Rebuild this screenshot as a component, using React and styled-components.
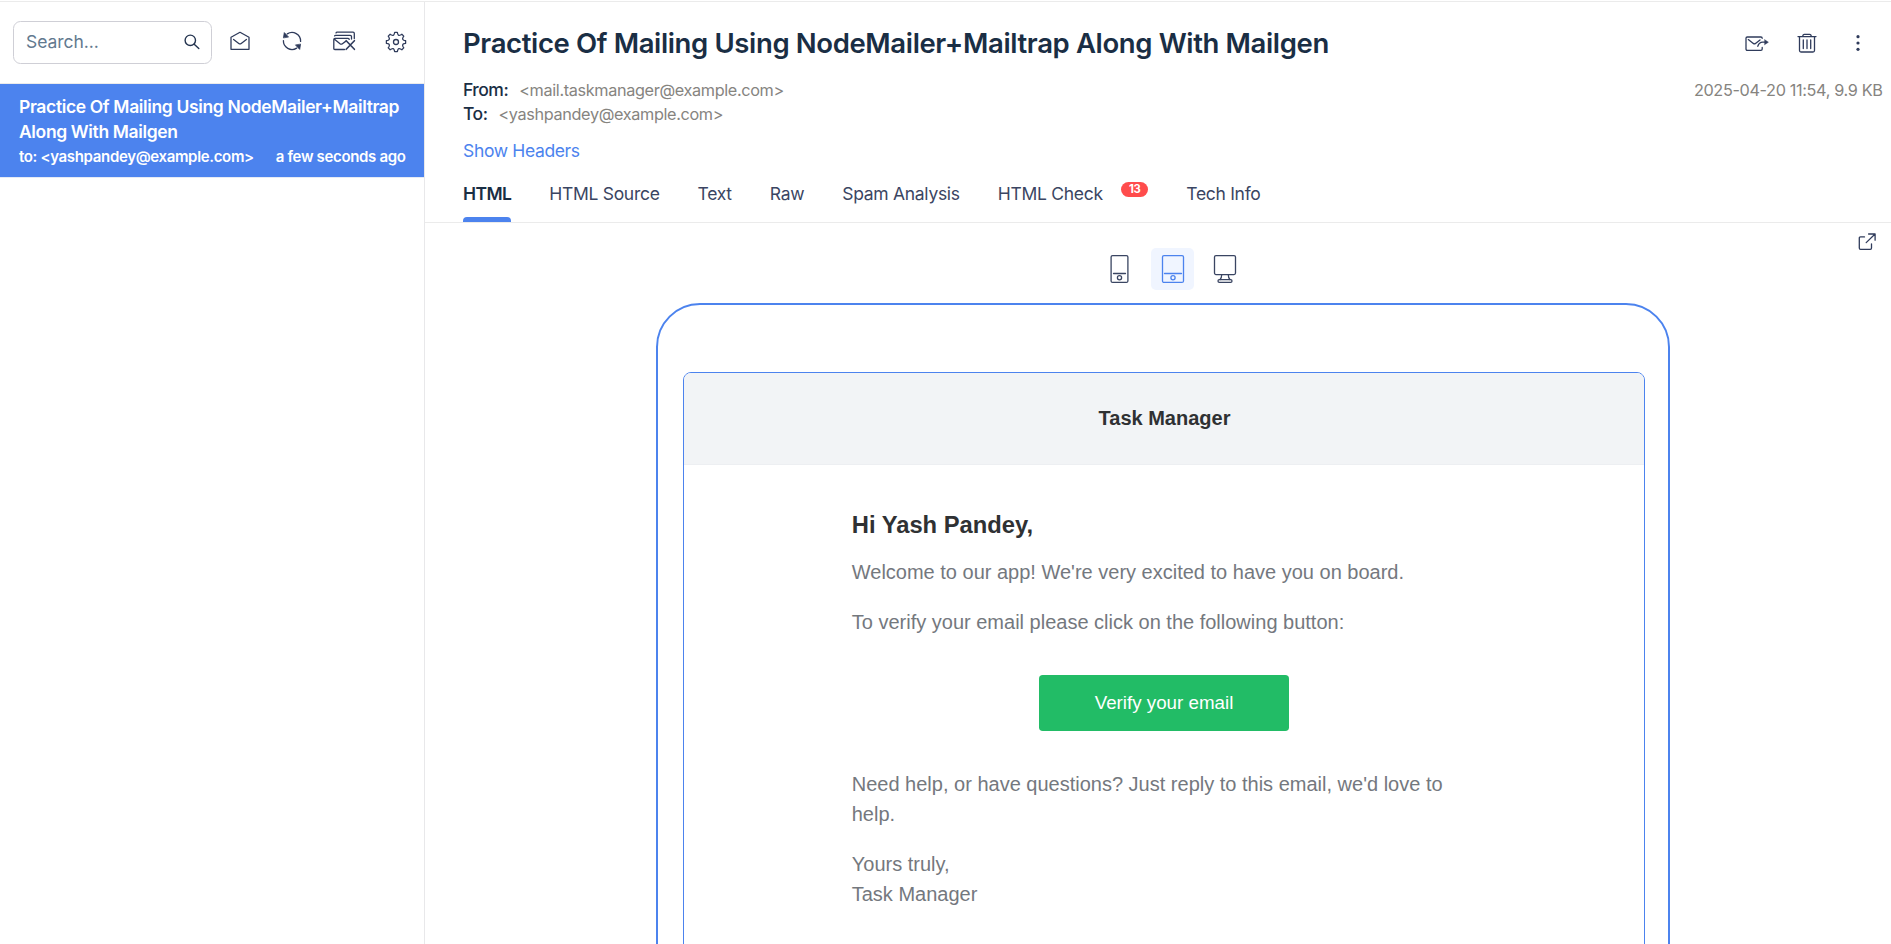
import React from 'react';
import styled, { createGlobalStyle } from 'styled-components';

const Global = createGlobalStyle`
  *, *::before, *::after { box-sizing: border-box; }
  html, body { margin: 0; height: 100%; overflow: hidden; background: #fff; }
  body { font-family: Inter, "Liberation Sans", sans-serif; color: #1a2e44; }
  #root { height: 100%; }
`;

const Page = styled.div`
  display: flex;
  height: 944px;
  border-top: 1px solid #fff;
`;
const Frame = styled.div`
  display: flex;
  flex: 1;
  border-top: 1px solid #ebebeb;
`;
const Sidebar = styled.aside`
  width: 425px;
  flex: none;
  border-right: 1px solid #e8e8ea;
`;
const Toolbar = styled.div`
  display: flex;
  align-items: center;
  height: 82px;
  padding: 0 0 1px 13px;
  border-bottom: 1px solid #ebebeb;
`;
const SearchBox = styled.div`
  display: flex;
  align-items: center;
  justify-content: space-between;
  width: 199px;
  height: 43px;
  margin: 0 16px 0 0;
  padding: 0 11.5px 1px 12px;
  border: 1px solid #cfcfd6;
  border-radius: 7.5px;
  font-size: 17.5px;
  letter-spacing: -0.05px;
  color: #62798f;
  svg { color: #24344f; }
`;
const IconButton = styled.button`
  display: flex;
  align-items: center;
  justify-content: center;
  width: 24px;
  height: 24px;
  margin: 0 ${(p) => p.$gap || 0}px ${(p) => p.$lift || 0}px 0;
  padding: 0;
  border: 0;
  background: none;
  color: #2f3b5b;
`;
const Icon = styled.svg`
  display: block;
  flex: none;
  fill: none;
  stroke: currentColor;
  stroke-width: ${(p) => p.$w || 1.3};
  stroke-linejoin: round;
  stroke-linecap: round;
`;
const MessageItem = styled.div`
  height: 94px;
  padding: 10px 18.5px 0 19px;
  background: #4c83ee;
  border-bottom: 1px solid #e4eaf5;
  color: #fff;
  font-weight: 600;
`;
const MessageTitle = styled.div`
  font-size: 17.5px;
  line-height: 25px;
  letter-spacing: -0.36px;
`;
const MessageMeta = styled.div`
  display: flex;
  justify-content: space-between;
  font-size: 15px;
  line-height: 25px;
  letter-spacing: -0.34px;
  white-space: nowrap;
`;
const Main = styled.main`
  flex: 1;
  min-width: 0;
`;
const Header = styled.header`
  height: 221px;
  padding: 20px 8px 0 38px;
  border-bottom: 1px solid #ebebeb;
`;
const TitleRow = styled.div`
  display: flex;
  align-items: center;
  justify-content: space-between;
  height: 42px;
`;
const Title = styled.h1`
  margin: 0;
  font-size: 27.5px;
  font-weight: 600;
  line-height: 42px;
  letter-spacing: -0.365px;
  white-space: nowrap;
`;
const Actions = styled.div`
  display: flex;
  align-items: center;
  padding-right: 13px;
`;
const InfoRow = styled.div`
  display: flex;
  justify-content: space-between;
  margin-top: 14px;
  font-size: 16.25px;
  line-height: 24px;
  letter-spacing: -0.36px;
  color: #86847f;
`;
const Address = styled.div`
  display: flex;
  gap: 11px;
`;
const Label = styled.span`
  color: #1a2e44;
  font-size: 17.5px;
  font-weight: 500;
  letter-spacing: -0.5px;
`;
const DateText = styled.div`
  padding-right: 0.5px;
`;
const HeadersLink = styled.a`
  display: block;
  margin-top: 13px;
  font-size: 17.5px;
  line-height: 24px;
  letter-spacing: -0.35px;
  color: #4c83ee;
`;
const Tabs = styled.nav`
  display: flex;
  gap: 38px;
  margin-top: 18px;
  height: 41px;
`;
const Tab = styled.div`
  display: flex;
  flex-direction: column;
  justify-content: space-between;
  font-size: 17.5px;
  line-height: 26px;
  letter-spacing: ${(p) => (p.$active ? '-0.6px' : '-0.29px')};
  white-space: nowrap;
  color: ${(p) => (p.$active ? '#1a2e44' : '#3a4562')};
  font-weight: ${(p) => (p.$active ? 600 : 400)};
`;
const TabLabel = styled.div`
  display: flex;
`;
const Underline = styled.div`
  height: 5px;
  border-radius: 4px 4px 0 0;
  background: #4c83ee;
`;
const Badge = styled.span`
  width: 27px;
  height: 15px;
  margin-left: 18.5px;
  margin-top: 1px;
  border-radius: 8px;
  background: #ff4c4c;
  color: #fff;
  font-size: 11.25px;
  font-weight: 700;
  line-height: 15px;
  text-align: center;
`;
const Preview = styled.section`
  display: flex;
  flex-direction: column;
  align-items: center;
  height: 721px;
  overflow: hidden;
  padding-left: 10px;
`;
const PopoutRow = styled.div`
  display: flex;
  justify-content: flex-end;
  width: 100%;
  height: 25px;
  padding: 7px 12px 0 0;
`;
const Devices = styled.div`
  display: flex;
  gap: 9px;
  margin-left: 19px;
`;
const Device = styled.button`
  display: flex;
  align-items: center;
  justify-content: center;
  width: 43px;
  height: 42px;
  padding: 0;
  border: 0;
  border-radius: 5px;
  background: ${(p) => (p.$active ? '#f0f5ff' : 'none')};
  color: ${(p) => (p.$active ? '#4c83ee' : '#3a4562')};
`;
const Tablet = styled.div`
  flex: none;
  width: 1014px;
  height: 900px;
  margin-top: 13px;
  padding: 67px 23px 0 25px;
  border: 2px solid #4c83ee;
  border-radius: 44px;
`;
const Screen = styled.div`
  height: 820px;
  border: 1px solid #4c83ee;
  border-radius: 8px;
  overflow: hidden;
  font-family: "Liberation Sans", Arial, sans-serif;
  color: #74787e;
`;
const MailHead = styled.div`
  height: 92px;
  padding-left: 1px;
  border-bottom: 1px solid #edeff2;
  background: #f2f4f6;
  color: #2f3133;
  font-size: 20px;
  font-weight: 700;
  line-height: 90px;
  text-align: center;
`;
const MailBody = styled.div`
  width: 712px;
  margin: 0 auto;
  padding: 43px 43.75px;
`;
const Greeting = styled.h2`
  margin: 0 0 16px;
  color: #2f3133;
  font-size: 23.75px;
  line-height: 33px;
`;
const Paragraph = styled.p`
  margin: 0 0 20px;
  font-size: 20px;
  line-height: 30px;
`;
const VerifyButton = styled.button`
  display: block;
  width: 250px;
  height: 56px;
  margin: 38px auto;
  padding: 0;
  border: 0;
  border-radius: 3.75px;
  background: #22bc66;
  color: #fff;
  font: 18.75px "Liberation Sans", Arial, sans-serif;
  line-height: 56px;
`;

const SearchIcon = () => (
  <Icon width="16" height="16" viewBox="0 0 16 16" $w={1.4}>
    <circle cx="6.3" cy="6.3" r="5.2" /><path d="M10.2 10.2l4.6 4.4" />
  </Icon>
);
const MailOpenIcon = () => (
  <Icon width="24" height="24" viewBox="0 0 24 24">
    <path d="M3 8.3L12 3.3l9 5v12H3zM5.6 10.4l5.2 4c.8.6 1.600.6 2.400 0l5.200-4" />
  </Icon>
);
const RefreshIcon = () => (
  <Icon width="24" height="24" viewBox="0 0 24 24">
    <path d="M7.300 4.900A8.600 8.600 0 0 1 20.600 12.400M16.700 19.100A8.600 8.600 0 0 1 3.400 11.600" />
    <path d="M3.500 8.500l.8-4.900 4 4.200zM20.500 15.500l-.8 4.900-4-4.200z" fill="currentColor" strokeWidth=".8" />
  </Icon>
);
const MailsDeleteIcon = () => (
  <Icon width="24" height="24" viewBox="0 0 24 24">
    <path d="M12.500 20.500H2.900c-.7 0-1.100-.4-1.100-1.100V10.400c0-.7.400-1.100 1.100-1.100h13.200c.7 0 1.100.4 1.100 1.100M2.500 10.200l5.500 4.500c.8.600 1.600.6 2.400 0l3.200-2.300M2.600 6.900c.2-.5.600-.6 1-.6h14.600c.8 0 1.300.4 1.300 1.200v2.600M4 3.900c.2-.5.600-.7 1.100-.7h15.900c.8 0 1.300.5 1.300 1.300v5" />
    <path d="M14.200 11.700l8.200 8.600M22.400 11.700l-8.200 8.600" strokeWidth="1.600" />
  </Icon>
);
const teeth = Array.from({ length: 8 }, (_, i) => {
  const at = (r, deg) => {
    const a = ((i * 45 + deg) * Math.PI) / 180;
    return `${(12 + r * Math.sin(a)).toFixed(2)} ${(12 - r * Math.cos(a)).toFixed(2)}`;
  };
  return `${i ? 'L' : 'M'}${at(9.7, -8)}L${at(9.7, 8)}L${at(8.3, 12)}Q${at(6.4, 22.5)} ${at(8.3, 33)}`;
}).join('');
const GearIcon = () => (
  <Icon width="24" height="24" viewBox="0 0 24 24">
    <path d={`${teeth}Z`} /><circle cx="12" cy="12" r="2.5" />
  </Icon>
);
const ForwardIcon = () => (
  <Icon width="26" height="24" viewBox="0 0 26 24">
    <path d="M18.200 16.500v1.600c0 .8-.5 1.300-1.300 1.300H3.300C2.500 19.400 2 18.900 2 18.100V7.300C2 6.500 2.500 6 3.300 6h13.600c.8 0 1.300.400 1.300 1.300M4.300 8.600l5 3.800c.7.500 1.500.500 2.200 0l4.500-3.500M13.800 15.300c.8-2.500 2.300-4.100 4.800-4.100h3.200" />
    <path d="M20.800 8.800l3.600 2.400-3.600 2.400z" fill="currentColor" strokeWidth=".5" />
  </Icon>
);
const TrashIcon = () => (
  <Icon width="24" height="24" viewBox="0 0 24 24">
    <path d="M3 5.600h18M4.500 5.700v13.800c0 .9.600 1.500 1.500 1.500h12c.9 0 1.500-.6 1.500-1.500V5.700M7.800 5.300c0-1.300.5-2 1.600-2h5.200c1.100 0 1.600.7 1.600 2M8.300 9v8.600M12 9v8.600M15.700 9v8.600" />
  </Icon>
);
const DotsIcon = () => (
  <Icon width="24" height="24" viewBox="0 0 24 24">
    <g fill="currentColor" stroke="none">
      <circle cx="12" cy="5.700" r="1.600" /><circle cx="12" cy="12" r="1.600" /><circle cx="12" cy="18.300" r="1.600" />
    </g>
  </Icon>
);
const PopoutIcon = () => (
  <Icon width="20" height="20" viewBox="0 0 20 20">
    <path d="M7.500 4.900H3.500c-.8 0-1.200.5-1.200 1.200v10c0 .8.500 1.200 1.200 1.200h9.800c.8 0 1.200-.5 1.200-1.200v-4.300M9.200 10.600l8.600-8.400M11.600 2h6.500v6.200" />
  </Icon>
);
const PhoneIcon = () => (
  <Icon width="21" height="30" viewBox="0.500 0 21 30">
    <rect x="1.600" y="1.600" width="16.800" height="26.800" rx="1.500" /><path d="M4 19.500h12" /><circle cx="10" cy="23.800" r="2.100" />
  </Icon>
);
const TabletIcon = () => (
  <Icon width="24" height="30" viewBox="0 0 24 30">
    <rect x="1.500" y="1.600" width="21" height="26.800" rx="1.500" /><path d="M3.500 19.500h17" /><circle cx="12" cy="23.800" r="2.100" />
  </Icon>
);
const DesktopIcon = () => (
  <Icon width="24" height="30" viewBox="0 0 24 30">
    <rect x="1.500" y="1.600" width="21" height="19" rx="1.500" />
    <path d="M8.700 20.800c0 2-.5 3.500-1.600 4.700M15.300 20.800c0 2 .5 3.500 1.600 4.700" />
    <rect x="5" y="25.600" width="14" height="2.700" rx="1.300" />
  </Icon>
);

const tabs = ['HTML', 'HTML Source', 'Text', 'Raw', 'Spam Analysis', 'HTML Check', 'Tech Info'];

export default function App() {
  return (
    <>
      <Global />
      <Page>
        <Frame>
          <Sidebar>
            <Toolbar>
              <SearchBox><span>Search...</span><SearchIcon /></SearchBox>
              <IconButton $gap={28} $lift={2}><MailOpenIcon /></IconButton>
              <IconButton $gap={28} $lift={2}><RefreshIcon /></IconButton>
              <IconButton $gap={28} $lift={2}><MailsDeleteIcon /></IconButton>
              <IconButton $lift={1}><GearIcon /></IconButton>
            </Toolbar>
            <MessageItem>
              <MessageTitle>Practice Of Mailing Using NodeMailer+Mailtrap Along With Mailgen</MessageTitle>
              <MessageMeta><span>to: &lt;yashpandey@example.com&gt;</span><span>a few seconds ago</span></MessageMeta>
            </MessageItem>
          </Sidebar>
          <Main>
            <Header>
              <TitleRow>
                <Title>Practice Of Mailing Using NodeMailer+Mailtrap Along With Mailgen</Title>
                <Actions>
                  <IconButton $gap={26} $lift={1}><ForwardIcon /></IconButton>
                  <IconButton $gap={27} $lift={1}><TrashIcon /></IconButton>
                  <IconButton><DotsIcon /></IconButton>
                </Actions>
              </TitleRow>
              <InfoRow>
                <div>
                  <Address><Label>From:</Label><span>&lt;mail.taskmanager@example.com&gt;</span></Address>
                  <Address><Label>To:</Label><span>&lt;yashpandey@example.com&gt;</span></Address>
                </div>
                <DateText>2025-04-20 11:54, 9.9 KB</DateText>
              </InfoRow>
              <HeadersLink>Show Headers</HeadersLink>
              <Tabs>
                {tabs.map((name, i) => (
                  <Tab key={name} $active={i === 0}>
                    <TabLabel>{name}{name === 'HTML Check' && <Badge>13</Badge>}</TabLabel>
                    {i === 0 && <Underline />}
                  </Tab>
                ))}
              </Tabs>
            </Header>
            <Preview>
              <PopoutRow><IconButton><PopoutIcon /></IconButton></PopoutRow>
              <Devices>
                <Device><PhoneIcon /></Device>
                <Device $active><TabletIcon /></Device>
                <Device><DesktopIcon /></Device>
              </Devices>
              <Tablet>
                <Screen>
                  <MailHead>Task Manager</MailHead>
                  <MailBody>
                    <Greeting>Hi Yash Pandey,</Greeting>
                    <Paragraph>Welcome to our app! We're very excited to have you on board.</Paragraph>
                    <Paragraph>To verify your email please click on the following button:</Paragraph>
                    <VerifyButton>Verify your email</VerifyButton>
                    <Paragraph>Need help, or have questions? Just reply to this email, we'd love to help.</Paragraph>
                    <Paragraph>Yours truly,<br />Task Manager</Paragraph>
                  </MailBody>
                </Screen>
              </Tablet>
            </Preview>
          </Main>
        </Frame>
      </Page>
    </>
  );
}
